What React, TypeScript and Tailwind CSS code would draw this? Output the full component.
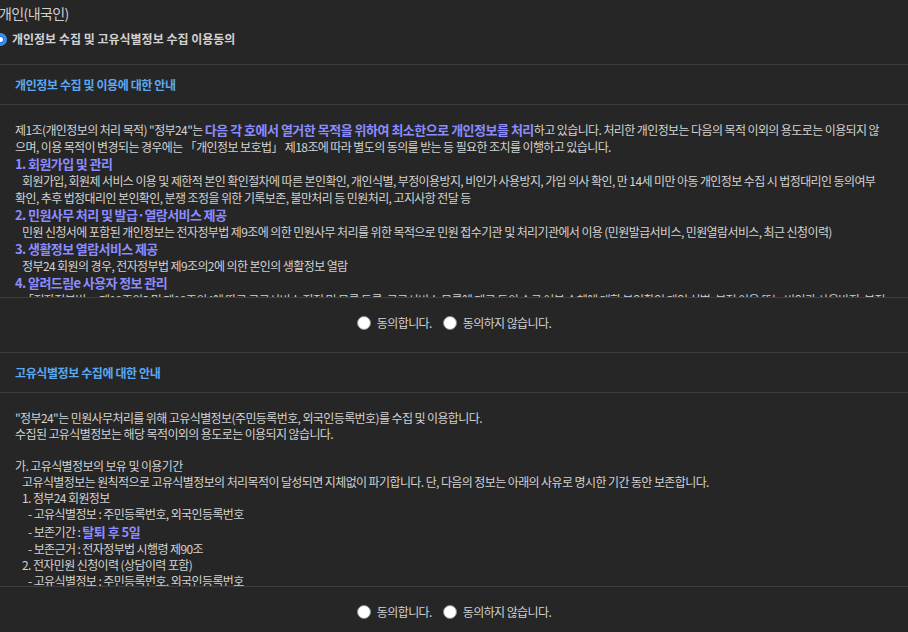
import React from 'react';

const font = "font-['Noto_Sans_CJK_KR','Liberation_Sans',sans-serif]";

function Hl({ children }: { children: React.ReactNode }) {
  return <span className="text-[13px] font-bold text-[#8c8cff] tracking-[-0.5px]">{children}</span>;
}

function Heading({ children }: { children: React.ReactNode }) {
  return <div className="h-[17px] leading-[17px] text-[13px] font-bold text-[#8c8cff] tracking-[-0.6px]">{children}</div>;
}

// one text row of a notice box; h sets the row pitch
function Line({ children, indent = 0, h = 'h-[17px]' }: { children?: React.ReactNode; indent?: number; h?: string }) {
  const pad = indent === 2 ? 'pl-[13px]' : indent === 1 ? 'pl-[7px]' : '';
  return <div className={`${pad} ${h} flex items-center leading-[16px]`}>{children}</div>;
}

function Radio() {
  return <span className="inline-block w-[14px] h-[14px] rounded-full bg-white border border-[#8a8a8a]" />;
}

function AgreeRow() {
  return (
    <div className="h-[54px] pb-[4px] flex items-center justify-center gap-[11px] text-[12px] text-[#d2d2d2] tracking-[-0.6px]">
      <label className="flex items-center gap-[6px]">
        <Radio />
        <span>동의합니다.</span>
      </label>
      <label className="flex items-center gap-[6px]">
        <Radio />
        <span>동의하지 않습니다.</span>
      </label>
    </div>
  );
}

function SectionHeader({ title }: { title: string }) {
  return (
    <div className="h-[41px] border-t border-b border-[#3e3e3e] flex items-center px-[15px] text-[12px] font-bold text-[#5aa9f2] tracking-[-0.4px]">
      {title}
    </div>
  );
}

export default function App() {
  return (
    <div className={`w-[908px] h-[632px] overflow-hidden bg-[#262626] text-[#d2d2d2] ${font}`}>
      <div className="h-[26px] pt-[3px] -ml-px text-[14px] text-[#d0d0d0] tracking-[-0.6px]">개인(내국인)</div>
      <div className="h-[38px] flex items-start pt-[4px]">
        <label className="flex items-center gap-[5px] -ml-[6px] text-[12px] font-bold text-[#d2d2d2]">
          <span className="w-[13px] h-[13px] rounded-full bg-[#1a73e8] border-[3px] border-[#3b8ff0] flex items-center justify-center">
            <span className="w-[5px] h-[5px] rounded-full bg-white" />
          </span>
          개인정보 수집 및 고유식별정보 수집 이용동의
        </label>
      </div>

      <SectionHeader title="개인정보 수집 및 이용에 대한 안내" />
      <div className="h-[192px] overflow-hidden pt-[16px] px-[15px] text-[12px] whitespace-nowrap tracking-[-0.6px]">
        <Line>
          제1조(개인정보의 처리 목적) "정부24"는&nbsp;<Hl>다음 각 호에서 열거한 목적을 위하여 최소한으로 개인정보를 처리</Hl>하고 있습니다. 처리한 개인정보는 다음의 목적 이외의 용도로는 이용되지 않
        </Line>
        <Line>으며, 이용 목적이 변경되는 경우에는 「개인정보 보호법」 제18조에 따라 별도의 동의를 받는 등 필요한 조치를 이행하고 있습니다.</Line>
        <Heading>1. 회원가입 및 관리</Heading>
        <Line indent={1}>
          회원가입, 회원제 서비스 이용 및 제한적 본인 확인절차에 따른 본인확인, 개인식별, 부정이용방지, 비인가 사용방지, 가입 의사 확인, 만 14세 미만 아동 개인정보 수집 시 법정대리인 동의여부
        </Line>
        <Line>확인, 추후 법정대리인 본인확인, 분쟁 조정을 위한 기록보존, 불만처리 등 민원처리, 고지사항 전달 등</Line>
        <Heading>2. 민원사무 처리 및 발급·열람서비스 제공</Heading>
        <Line indent={1}>
          민원 신청서에 포함된 개인정보는 전자정부법 제9조에 의한 민원사무 처리를 위한 목적으로 민원 접수기관 및 처리기관에서 이용 (민원발급서비스, 민원열람서비스, 최근 신청이력)
        </Line>
        <Heading>3. 생활정보 열람서비스 제공</Heading>
        <Line indent={1}>정부24 회원의 경우, 전자정부법 제9조의2에 의한 본인의 생활정보 열람</Line>
        <Heading>4. 알려드림e 사용자 정보 관리</Heading>
        <Line indent={1}>
          「전자정부법」 제18조의3 및 제18조의4에 따른 공공서비스 지정 및 목록 등록, 공공서비스 목록에 제공 등의 수급 여부 수혜에 대한 본인확인 개인 식별, 부정 이용 또는 비인가 사용방지, 부정
        </Line>
      </div>
      <div className="border-t border-[#3e3e3e]" />
      <AgreeRow />

      <SectionHeader title="고유식별정보 수집에 대한 안내" />
      <div className="h-[193px] overflow-hidden pt-[17px] px-[15px] text-[12px] whitespace-nowrap tracking-[-0.6px]">
        <Line h="h-[16px]">"정부24"는 민원사무처리를 위해 고유식별정보(주민등록번호, 외국인등록번호)를 수집 및 이용합니다.</Line>
        <Line h="h-[16px]">수집된 고유식별정보는 해당 목적이외의 용도로는 이용되지 않습니다.</Line>
        <Line h="h-[16px]" />
        <Line h="h-[16px]">가. 고유식별정보의 보유 및 이용기간</Line>
        <Line h="h-[16px]" indent={1}>고유식별정보는 원칙적으로 고유식별정보의 처리목적이 달성되면 지체없이 파기합니다. 단, 다음의 정보는 아래의 사유로 명시한 기간 동안 보존합니다.</Line>
        <Line h="h-[16px]" indent={1}>1. 정부24 회원정보</Line>
        <Line h="h-[16px]" indent={2}>- 고유식별정보 : 주민등록번호, 외국인등록번호</Line>
        <Line h="h-[19px]" indent={2}>
          - 보존기간 :&nbsp;<Hl>탈퇴 후 5일</Hl>
        </Line>
        <Line h="h-[16px]" indent={2}>- 보존근거 : 전자정부법 시행령 제90조</Line>
        <Line h="h-[16px]" indent={1}>2. 전자민원 신청이력 (상담이력 포함)</Line>
        <Line h="h-[16px]" indent={2}>- 고유식별정보 : 주민등록번호, 외국인등록번호</Line>
      </div>
      <div className="border-t border-[#3e3e3e]" />
      <AgreeRow />
    </div>
  );
}
